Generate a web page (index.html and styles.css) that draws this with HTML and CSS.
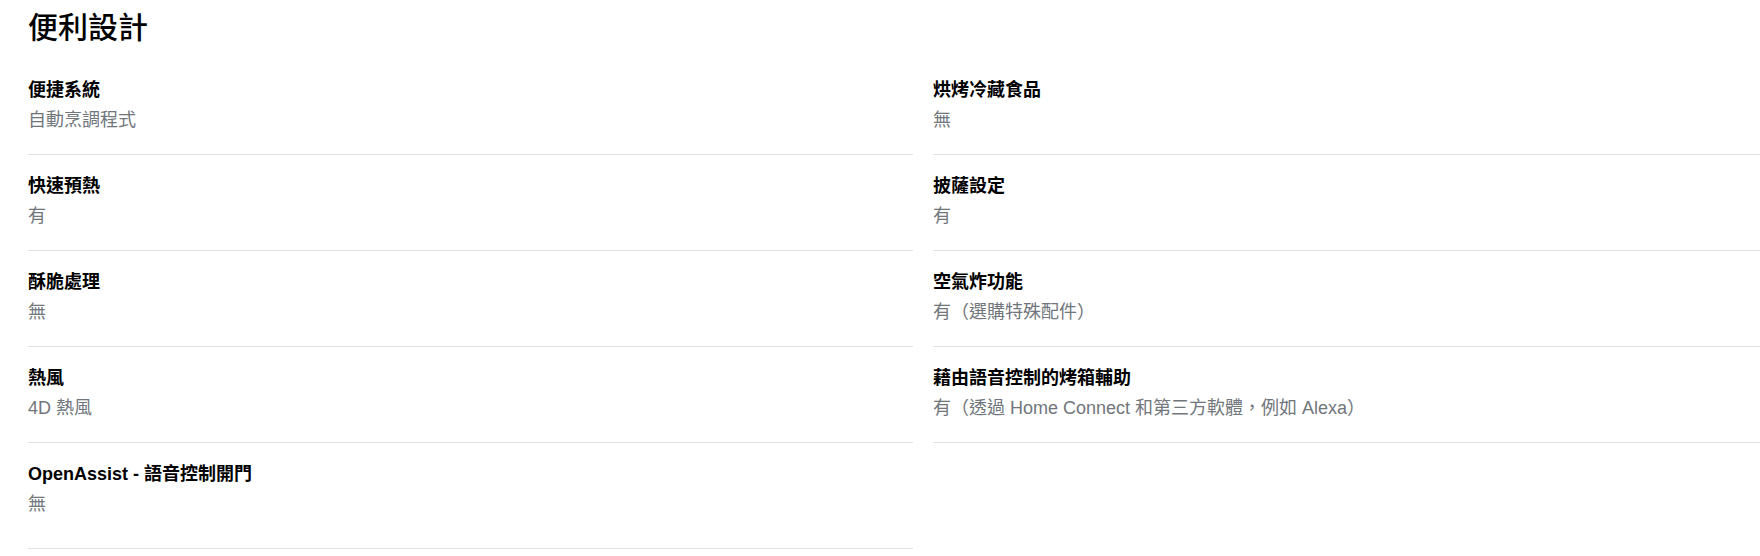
FILE: index.html
```html
<!DOCTYPE html>
<html lang="zh-Hant">
<head>
<meta charset="utf-8">
<title>便利設計</title>
<link rel="stylesheet" href="styles.css">
</head>
<body>
<main class="page">
  <h1 class="title">便利設計</h1>
  <div class="specs">
    <dl class="col">
      <div class="item"><dt class="label">便捷系統</dt><dd class="value">自動烹調程式</dd></div>
      <div class="item"><dt class="label">快速預熱</dt><dd class="value">有</dd></div>
      <div class="item"><dt class="label">酥脆處理</dt><dd class="value">無</dd></div>
      <div class="item"><dt class="label">熱風</dt><dd class="value">4D 熱風</dd></div>
      <div class="item item-last"><dt class="label">OpenAssist - 語音控制開門</dt><dd class="value">無</dd></div>
    </dl>
    <dl class="col">
      <div class="item"><dt class="label">烘烤冷藏食品</dt><dd class="value">無</dd></div>
      <div class="item"><dt class="label">披薩設定</dt><dd class="value">有</dd></div>
      <div class="item"><dt class="label">空氣炸功能</dt><dd class="value">有（選購特殊配件）</dd></div>
      <div class="item"><dt class="label">藉由語音控制的烤箱輔助</dt><dd class="value">有（透過 Home Connect 和第三方軟體，例如 Alexa）</dd></div>
    </dl>
  </div>
</main>
</body>
</html>
```

FILE: styles.css
```css
html, body {
  margin: 0;
  padding: 0;
  background: #ffffff;
  overflow: hidden;
}

body {
  font-family: "Liberation Sans", "Noto Sans CJK TC", sans-serif;
  color: #000000;
}

.page {
  padding: 8px 0 0 28px;
}

.title {
  margin: 0 0 11px 0;
  font-family: "Liberation Sans", "Noto Sans CJK TC", sans-serif;
  font-size: 30px;
  line-height: 40px;
  font-weight: 500;
}

.specs {
  display: grid;
  grid-template-columns: 885px 885px;
  column-gap: 20px;
  align-items: start;
}

.col {
  margin: 0;
  display: flex;
  flex-direction: column;
}

.item {
  padding: 16px 0 19px 0;
  border-bottom: 1px solid #e0e2e5;
}

.item-last {
  padding-bottom: 29px;
}

.label {
  margin: 0;
  font-size: 18px;
  line-height: 30px;
  font-weight: 700;
  color: #000000;
}

.value {
  margin: 0;
  font-size: 18px;
  line-height: 30px;
  font-weight: 400;
  color: #71767c;
}
```
